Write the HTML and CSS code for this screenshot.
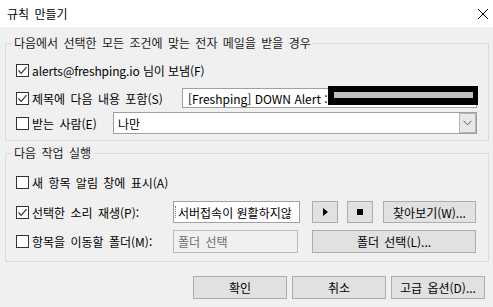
FILE: index.html
```html
<!DOCTYPE html>
<html lang="ko">
<head>
  <meta charset="UTF-8">
  <title>규칙 만들기</title>
  <link rel="stylesheet" href="styles.css">
</head>
<body>

  <div class="dialog">
    <div class="titlebar">
      <span class="title">규칙 만들기</span>
      <svg class="close" width="12" height="12" viewBox="0 0 12 12">
        <path d="M1 1 L11 11 M11 1 L1 11" stroke="#000" stroke-width="1" fill="none"/>
      </svg>
    </div>

    <div class="content">
      <fieldset class="group group-cond">
        <legend>다음에서 선택한 모든 조건에 맞는 전자 메일을 받을 경우</legend>

        <div class="row row-from">
          <label class="check from-label">
            <span class="box"><svg width="11" height="11" viewBox="0 0 11 11"><path d="M1.5 5.5 L4.2 8.3 L9.5 2.2" stroke="#333" stroke-width="1.2" fill="none"/></svg></span>
            alerts@freshping.io 님이 보냄(F)
          </label>
        </div>

        <div class="row row-subject">
          <label class="check subject-label">
            <span class="box"><svg width="11" height="11" viewBox="0 0 11 11"><path d="M1.5 5.5 L4.2 8.3 L9.5 2.2" stroke="#333" stroke-width="1.2" fill="none"/></svg></span>
            제목에 다음 내용 포함(S)
          </label>
          <div class="textbox subject-box">
            [Freshping] DOWN Alert :
            <span class="redact"><span class="redact-bar"></span></span>
          </div>
        </div>

        <div class="row row-to">
          <label class="check to-label">
            <span class="box"></span>
            받는 사람(E)
          </label>
          <div class="combo">
            <span class="combo-text">나만</span>
            <span class="combo-btn">
              <svg width="9" height="6" viewBox="0 0 9 6"><path d="M0.5 0.8 L4.5 4.8 L8.5 0.8" stroke="#555" stroke-width="1" fill="none"/></svg>
            </span>
          </div>
        </div>
      </fieldset>

      <fieldset class="group group-action">
        <legend>다음 작업 실행</legend>

        <div class="row row-alert">
          <label class="check">
            <span class="box"></span>
            새 항목 알림 창에 표시(A)
          </label>
        </div>

        <div class="row row-sound">
          <label class="check action-label">
            <span class="box"><svg width="11" height="11" viewBox="0 0 11 11"><path d="M1.5 5.5 L4.2 8.3 L9.5 2.2" stroke="#333" stroke-width="1.2" fill="none"/></svg></span>
            선택한 소리 재생(P):
          </label>
          <div class="textbox sound-box"><span class="caret"></span>서버접속이 원활하지않</div>
          <button class="btn icon-btn play-btn">
            <svg width="5" height="8" viewBox="0 0 5 8"><path d="M0 0 L5 4 L0 8 Z" fill="#000"/></svg>
          </button>
          <button class="btn icon-btn stop-btn">
            <svg width="6" height="6" viewBox="0 0 6 6"><rect width="6" height="6" fill="#000"/></svg>
          </button>
          <button class="btn browse-btn">찾아보기(W)...</button>
        </div>

        <div class="row row-folder">
          <label class="check action-label">
            <span class="box"></span>
            항목을 이동할 폴더(M):
          </label>
          <div class="textbox folder-box">폴더 선택</div>
          <button class="btn folder-btn">폴더 선택(L)...</button>
        </div>
      </fieldset>

      <div class="footer">
        <button class="btn footer-btn">확인</button>
        <button class="btn footer-btn">취소</button>
        <button class="btn footer-btn">고급 옵션(D)...</button>
      </div>
    </div>
  </div>

</body>
</html>
```

FILE: styles.css
```css
body {
  margin: 0;
  background-color: #f0f0f0;
  font-family: 'Noto Sans CJK KR', 'Noto Sans', sans-serif;
  font-size: 12px;
  word-spacing: 2px;
  color: #000;
}

.dialog {
  width: 493px;
  height: 307px;
  overflow: hidden;
}

.titlebar {
  height: 27px;
  background-color: #fff;
  display: flex;
  align-items: center;
  justify-content: space-between;
  padding: 0 4px 0 7px;
}

.title {
  font-size: 12px;
}

.content {
  padding-top: 8px;
}

.group {
  margin: 0 4px 0 5px;
  padding: 0 11px 0 10px;
  border: 1px solid #dcdcdc;
  min-width: 0;
}

.group legend {
  margin-left: -4px;
  padding: 0 2px;
  line-height: 16px;
  color: #1a1a1a;
}

.group-cond {
  padding-top: 9px;
  padding-bottom: 6px;
}

.group-action {
  margin-top: 4px;
  padding-top: 11px;
  padding-bottom: 8px;
}

.row {
  display: flex;
  align-items: center;
}

.row-from {
  height: 20px;
}

.row-subject {
  margin-top: 8px;
  height: 20px;
}

.row-to {
  margin-top: 4px;
  height: 22px;
}

.row-alert {
  height: 20px;
}

.row-sound {
  margin-top: 9px;
  height: 22px;
}

.row-folder {
  margin-top: 7px;
  height: 23px;
}

.check {
  display: flex;
  align-items: center;
  white-space: nowrap;
}

.from-label {
  word-spacing: 0;
  letter-spacing: -0.1px;
}

.box {
  width: 11px;
  height: 11px;
  border: 1px solid #333;
  background-color: #fff;
  margin-right: 3px;
  display: flex;
  align-items: center;
  justify-content: center;
  flex-shrink: 0;
}

.subject-label {
  width: 166px;
}

.to-label {
  width: 97px;
}

.action-label {
  width: 157px;
}

.textbox {
  box-sizing: border-box;
  background-color: #fff;
  border: 1px solid #a0a0a0;
  padding: 0 5px;
  display: flex;
  align-items: center;
  white-space: nowrap;
  overflow: hidden;
  word-spacing: 0;
}

.subject-box {
  position: relative;
  width: 295px;
  height: 20px;
  overflow: visible;
}

.redact {
  position: absolute;
  left: 145px;
  top: -3px;
  width: 150px;
  height: 19px;
  background-color: #000;
}

.redact-bar {
  position: absolute;
  left: 6px;
  top: 6px;
  width: 139px;
  height: 6px;
  background-color: #c0c0c0;
}

.combo {
  box-sizing: border-box;
  width: 364px;
  height: 22px;
  background-color: #fff;
  border: 1px solid #a0a0a0;
  display: flex;
  align-items: center;
  justify-content: space-between;
  padding-left: 4px;
}

.combo-btn {
  box-sizing: border-box;
  width: 17px;
  height: 20px;
  background-color: #e8e8e8;
  border: 1px solid #b4b4b4;
  display: flex;
  align-items: center;
  justify-content: center;
}

.sound-box {
  width: 127px;
  height: 22px;
  padding: 0 2px 0 1px;
}

.caret {
  width: 1px;
  height: 12px;
  margin-right: 1px;
  border-left: 1px dotted #888;
}

.folder-box {
  width: 125px;
  height: 23px;
  background-color: #f0f0f0;
  border-color: #b5bcc4;
  color: #6d6d6d;
  padding: 0 4px;
  word-spacing: 2px;
}

.btn {
  box-sizing: border-box;
  background-color: #e1e1e1;
  border: 1px solid #adadad;
  font-family: inherit;
  font-size: 12px;
  word-spacing: 2px;
  color: #000;
  padding: 0;
  display: flex;
  align-items: center;
  justify-content: center;
}

.icon-btn {
  width: 26px;
  height: 22px;
}

.play-btn {
  margin-left: 12px;
}

.stop-btn {
  margin-left: 9px;
}

.browse-btn {
  margin-left: 10px;
  width: 93px;
  height: 22px;
}

.folder-btn {
  margin-left: 14px;
  width: 164px;
  height: 23px;
}

.footer {
  display: flex;
  justify-content: flex-end;
  gap: 5px;
  margin-top: 14px;
  padding-right: 8px;
}

.footer-btn {
  width: 94px;
  height: 23px;
}
```
